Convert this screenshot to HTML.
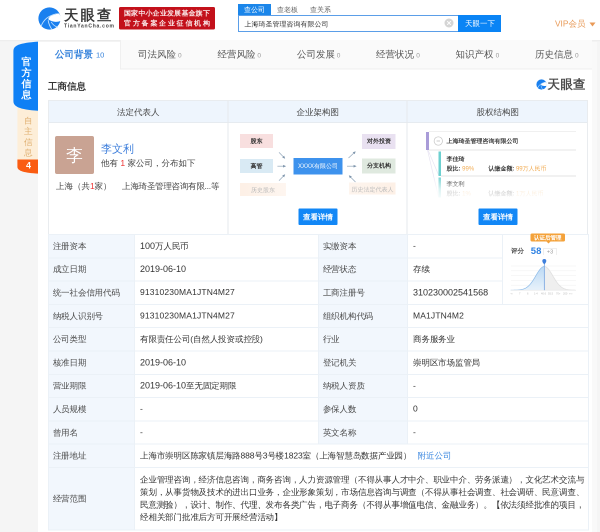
<!DOCTYPE html>
<html><head><meta charset="utf-8">
<style>
*{margin:0;padding:0;box-sizing:border-box}
html,body{width:600px;height:532px;overflow:hidden;background:#f5f5f5;font-family:"Liberation Sans",sans-serif;color:#333}
.a{position:absolute;white-space:nowrap}
#hdr{position:absolute;left:0;top:0;width:600px;height:40px;background:#fff}
#card{position:absolute;left:38px;top:41px;width:554px;height:491px;background:#fff}
.tab{position:absolute;top:41px;height:28px;font-size:9.5px;color:#555;line-height:27px;padding-left:18px}
.tab i{font-style:normal;font-size:6.5px;color:#999;margin-left:2px}
.ph{position:absolute;top:100px;height:24px;font-size:8.5px;color:#444;text-align:center;line-height:25px}
.pb{position:absolute;top:100px;height:134px;border:1px solid #e8eef5;border-bottom:none}
table{position:absolute;left:48px;top:234px;width:540px;table-layout:fixed;border-collapse:collapse;font-size:8.5px;letter-spacing:-0.12px}
td{border:1px solid #ebf1f7;height:23.3px;padding:0 5px;color:#333;white-space:nowrap}
td.l{background:#f2f7fd;color:#4a4a4a;padding-left:3.8px}
.bx{font-size:6.2px;font-weight:bold;color:#333;text-align:center;line-height:14px}
.btn{width:39px;height:16.5px;background:#1287f6;color:#fff;font-size:7.6px;font-weight:bold;text-align:center;line-height:16.5px;border-radius:1px}
.d{font-size:9px;letter-spacing:0}
.m{letter-spacing:0.15px}
</style></head><body>
<div id="wrap" style="position:absolute;left:0;top:0;transform:scale(0.5);transform-origin:0 0;width:1200px;height:1064px;will-change:transform"><div style="zoom:2;position:relative;width:600px;height:532px">
<div id="hdr">
  <svg class="a" style="left:37.4px;top:6.7px" width="24" height="24" viewBox="0 0 24 24">
    <circle cx="12" cy="12" r="11.1" fill="#1a80ef"/>
    <path d="M10.6 12.6 C12.6 8.8 16.6 6.6 21.4 7 C23.2 9 23.6 11.5 23.4 14.4 C19 16 14.4 15.6 10.6 12.6Z" fill="#fff"/>
    <path d="M3.6 19.6 C5.8 14 10.5 9.2 18.5 7.6" stroke="#bfe0ff" stroke-width="0.9" fill="none"/>
    <path d="M10.6 13.6 C11.2 17.4 12.6 20.6 14.6 23.2" stroke="#bfe0ff" stroke-width="0.9" fill="none"/>
    <path d="M13.6 15.4 C15.2 18 17.6 20 20.4 20.8" stroke="#bfe0ff" stroke-width="0.8" fill="none"/>
  </svg>
  <div class="a" style="left:64px;top:6px;font-size:14.5px;font-weight:bold;letter-spacing:2px;color:#383838;line-height:18px">天眼查</div>
  <div class="a" style="left:64px;top:23px;font-size:5px;font-weight:bold;color:#444;line-height:6px;letter-spacing:0.75px">TianYanCha.com</div>
  <div class="a" style="left:119px;top:7px;width:96px;height:22.5px;background:#c3111b;border-radius:1.5px"></div>
  <div class="a" style="left:124px;top:8px;font-size:7px;font-weight:bold;color:#fbeaea;line-height:10px;letter-spacing:0.17px">国家中小企业发展基金旗下</div>
  <div class="a" style="left:124px;top:18px;font-size:7px;font-weight:bold;color:#fbeaea;line-height:10px;letter-spacing:1.75px">官方备案企业征信机构</div>
  <div class="a" style="left:238px;top:4px;width:33px;height:11px;background:#1b86ea"></div>
  <div class="a" style="left:244px;top:4px;font-size:7px;color:#fff;line-height:11px">查公司</div>
  <div class="a" style="left:277px;top:4px;font-size:7px;color:#666;line-height:11px">查老板</div>
  <div class="a" style="left:310px;top:4px;font-size:7px;color:#666;line-height:11px">查关系</div>
  <div class="a" style="left:238px;top:15px;width:221px;height:17px;border:1px solid #5b9ee8"></div>
  <div class="a" style="left:244.5px;top:15.5px;font-size:7px;color:#333;line-height:17px">上海琦圣管理咨询有限公司</div>
  <svg class="a" style="left:444px;top:18px" width="10" height="10" viewBox="0 0 10 10"><circle cx="5" cy="5" r="4.5" fill="#d5d5d5"/><path d="M3.2 3.2L6.8 6.8M6.8 3.2L3.2 6.8" stroke="#fff" stroke-width="1"/></svg>
  <div class="a" style="left:458px;top:15px;width:43px;height:17px;background:#0a84f5"></div>
  <div class="a" style="left:465px;top:15px;font-size:7.4px;color:#fff;line-height:17px">天眼一下</div>
  <div class="a" style="left:555px;top:18px;font-size:8.3px;color:#e99a57;line-height:12px">VIP会员</div>
  <svg class="a" style="left:589.3px;top:22.5px" width="6" height="5" viewBox="0 0 6 5"><path d="M0 0H6L3 4Z" fill="#e99a57"/></svg>
</div>

<div id="card"></div>
<div class="a" style="left:592px;top:40px;width:5px;height:492px;background:#f9f9f9"></div>
<div class="a" style="left:0;top:40px;width:600px;height:2px;background:linear-gradient(#ececec,#f6f6f6)"></div>
<!-- left side tabs -->
<svg class="a" style="left:13px;top:41px" width="25" height="133" viewBox="0 0 25 133">
  <path d="M4.4 60 H25 V119 H4.4Z" fill="#fdeed8"/>
  <path d="M4.4 118.5 H25 V132.6 C12 132 4.4 130 4.4 126Z" fill="#fa5c12"/>
  <path d="M0.4 10 C0.4 4.5 6 2 25 0.6 V69.8 C6 68.5 0.4 65.5 0.4 60Z" fill="#0f80f5"/>
</svg>
<div class="a" style="left:21.5px;top:56.2px;width:10px;font-size:10px;font-weight:bold;color:#fff;line-height:11px;white-space:normal">官方信息</div>
<div class="a" style="left:24px;top:115.6px;width:8.5px;font-size:8.5px;color:#dfae6e;line-height:10.6px;white-space:normal">自主信息</div>
<div class="a" style="left:26px;top:159.8px;font-size:9px;font-weight:bold;color:#fff;line-height:11px">4</div>

<!-- tabs -->
<div class="a" style="left:55px;top:41px;font-size:9.5px;font-weight:bold;color:#3582db;line-height:27px">公司背景<span style="font-size:7.5px;font-weight:normal;margin-left:3px">10</span></div>
<div class="a" style="left:120px;top:40px;width:472px;height:29.5px;background:#fafafa;border-bottom:1px solid #efefef;border-left:1px solid #f0f0f0"></div>
<div class="tab" style="left:120.0px;width:79px">司法风险<i>0</i></div>
<div class="tab" style="left:199.4px;width:79px">经营风险<i>0</i></div>
<div class="tab" style="left:278.8px;width:79px">公司发展<i>0</i></div>
<div class="tab" style="left:358.2px;width:79px">经营状况<i>0</i></div>
<div class="tab" style="left:437.6px;width:79px">知识产权<i>0</i></div>
<div class="tab" style="left:517.0px;width:79px">历史信息<i>0</i></div>

<div class="a" style="left:48px;top:79.3px;font-size:9.5px;font-weight:bold;color:#333;line-height:14px">工商信息</div>
<svg class="a" style="left:536px;top:78.8px" width="11" height="11" viewBox="0 0 24 24">
    <circle cx="12" cy="12" r="11.1" fill="#1a80ef"/>
    <path d="M10.6 12.6 C12.6 8.8 16.6 6.6 21.4 7 C23.2 9 23.6 11.5 23.4 14.4 C19 16 14.4 15.6 10.6 12.6Z" fill="#fff"/>
    <path d="M3.6 19.6 C5.8 14 10.5 9.2 18.5 7.6" stroke="#bfe0ff" stroke-width="1.2" fill="none"/>
    <path d="M10.6 13.6 C11.2 17.4 12.6 20.6 14.6 23.2" stroke="#bfe0ff" stroke-width="1.2" fill="none"/>
</svg>
<div class="a" style="left:547.5px;top:76.5px;font-size:12.5px;font-weight:bold;letter-spacing:0.3px;color:#4a4a4a;line-height:15px">天眼查</div>

<!-- panels -->
<div class="a" style="left:48px;top:100px;width:540px;height:135px;border:1px solid #e9ecef;border-bottom:none"></div>
<div class="a" style="left:49px;top:101px;width:538px;height:22px;background:#eef5fd;border-bottom:1px solid #e6ebf0"></div>
<div class="a" style="left:227.5px;top:101px;width:1px;height:134px;background:#e6e9ed"></div>
<div class="a" style="left:406.5px;top:101px;width:1px;height:134px;background:#e6e9ed"></div>
<div class="ph" style="left:48px;width:180px">法定代表人</div>
<div class="ph" style="left:228px;width:179px">企业架构图</div>
<div class="ph" style="left:407px;width:181px">股权结构图</div>

<!-- panel 1 -->
<div class="a" style="left:55px;top:136px;width:39px;height:38px;background:#c9a393;border-radius:2px;color:#fff;font-size:17px;text-align:center;line-height:38px">李</div>
<div class="a" style="left:101px;top:142px;font-size:11px;color:#3e7fdc;line-height:14px">李文利</div>
<div class="a" style="left:101px;top:158px;font-size:8.5px;color:#444;line-height:11px">他有 <span style="color:#e33">1</span> 家公司，分布如下</div>
<div class="a" style="left:56px;top:181px;font-size:8.5px;color:#444;line-height:11px">上海（共<span style="color:#e33">1</span>家）</div>
<div class="a" style="left:122px;top:181px;font-size:8.5px;color:#444;line-height:11px;letter-spacing:-0.25px">上海琦圣管理咨询有限...等</div>


<!-- panel 2 -->
<div class="a bx" style="left:240px;top:134px;width:33px;height:14px;background:#f8dfdf">股东</div>
<div class="a bx" style="left:240px;top:159px;width:33px;height:14px;background:#d9eaf4">高管</div>
<div class="a bx" style="left:240px;top:183px;width:46px;height:13px;background:linear-gradient(90deg,#fdf0e6,#fef6f0);color:#bbb;font-weight:normal">历史股东</div>
<div class="a" style="left:293.5px;top:158px;width:49px;height:16.5px;background:#3d92ed;color:#fff;font-size:6px;text-align:center;line-height:16.5px">XXXX有限公司</div>
<div class="a bx" style="left:362px;top:134px;width:33.5px;height:15px;background:#e9e1f1">对外投资</div>
<div class="a bx" style="left:362px;top:158.5px;width:33.5px;height:15px;background:#dfe9df">分支机构</div>
<div class="a bx" style="left:349px;top:182.5px;width:46.5px;height:12px;background:linear-gradient(90deg,#fef5ee,#fdf0e6);color:#bbb;font-weight:normal">历史法定代表人</div>
<svg class="a" style="left:230px;top:130px" width="175" height="70" viewBox="230 130 175 70">
 <defs><marker id="ah" markerWidth="4" markerHeight="4" refX="2.6" refY="2" orient="auto"><path d="M0 0.2L4 2L0 3.8Z" fill="#7f96ad"/></marker></defs>
 <g stroke="#98abbe" stroke-width="0.75" fill="none" marker-end="url(#ah)">
  <path d="M279 152.4L284.5 158"/>
  <path d="M277.4 166.2H285"/>
  <path d="M279 180.6L284.5 175"/>
  <path d="M348.5 158L355 152"/>
  <path d="M347 166.2H355.5"/>
  <path d="M355.5 182L349.5 176"/>
 </g>
</svg>
<div class="a btn" style="left:298.5px;top:208.5px">查看详情</div>

<!-- panel 3 -->
<svg class="a" style="left:420px;top:128px" width="40" height="76" viewBox="420 128 40 76">
 <path d="M428 150L438.6 175M427.5 150L438.5 197" stroke="#e6e2f2" stroke-width="0.6" fill="none"/>
</svg>
<div class="a" style="left:429px;top:131px;width:147px;height:19.5px;background:#fff;border-top:1px solid #f0f0f0;border-bottom:1px solid #e6e6e6"></div>
<div class="a" style="left:426px;top:132px;width:3px;height:18px;background:#a99cd8"></div>
<svg class="a" style="left:433px;top:136px" width="11" height="11" viewBox="0 0 11 11"><circle cx="5.3" cy="5" r="4.2" fill="#fff" stroke="#c4c4c4" stroke-width="0.7"/><path d="M3.6 5H7" stroke="#aaa" stroke-width="0.6"/></svg>
<div class="a" style="left:446.5px;top:137px;font-size:6px;font-weight:bold;color:#3a3a3a;line-height:8px">上海琦圣管理咨询有限公司</div>
<div class="a" style="left:441px;top:151.5px;width:135px;height:25px;background:#fff;border-bottom:1px solid #e3e3e3"></div>
<div class="a" style="left:438.3px;top:151.6px;width:2.8px;height:24.3px;background:#6dd0d0"></div>
<div class="a" style="left:446.5px;top:155px;font-size:6px;font-weight:bold;color:#3a3a3a;line-height:8px">李佳琦</div>
<div class="a" style="left:446.5px;top:164.3px;font-size:6px;font-weight:bold;color:#3a3a3a;line-height:8px">股比: <span style="color:#f2ad55;font-weight:normal">99%</span></div>
<div class="a" style="left:488.3px;top:164.3px;font-size:6px;font-weight:bold;color:#3a3a3a;line-height:8px">认缴金额: <span style="color:#f2ad55;font-weight:normal">99万人民币</span></div>
<div class="a" style="left:438.3px;top:177.3px;width:2.8px;height:20px;background:#6dd0d0"></div>
<div class="a" style="left:446.5px;top:180.2px;font-size:6px;font-weight:bold;color:#3a3a3a;line-height:8px">李文利</div>
<div class="a" style="left:446.5px;top:189.3px;font-size:6px;font-weight:bold;color:#3a3a3a;line-height:8px">股比: <span style="color:#f2ad55;font-weight:normal">1%</span></div>
<div class="a" style="left:488.3px;top:189.3px;font-size:6px;font-weight:bold;color:#3a3a3a;line-height:8px">认缴金额: <span style="color:#f2ad55;font-weight:normal">1万人民币</span></div>
<div class="a" style="left:425px;top:177px;width:155px;height:24px;background:linear-gradient(180deg,rgba(255,255,255,0.1),rgba(255,255,255,0.75) 50%,#fff)"></div>
<div class="a btn" style="left:478.5px;top:208.5px">查看详情</div>

<!-- table -->
<table>
<colgroup><col style="width:86px"><col style="width:184px"><col style="width:89px"><col style="width:95px"><col style="width:86px"></colgroup>
<tr><td class="l">注册资本</td><td><span class="d">100</span>万人民币</td><td class="l">实缴资本</td><td>-</td><td rowspan="3"></td></tr>
<tr><td class="l">成立日期</td><td><span class="d">2019-06-10</span></td><td class="l">经营状态</td><td>存续</td></tr>
<tr><td class="l">统一社会信用代码</td><td><span class="m">91310230MA1JTN4M27</span></td><td class="l">工商注册号</td><td><span class="d">310230002541568</span></td></tr>
<tr><td class="l">纳税人识别号</td><td><span class="m">91310230MA1JTN4M27</span></td><td class="l">组织机构代码</td><td colspan="2"><span class="m">MA1JTN4M2</span></td></tr>
<tr><td class="l">公司类型</td><td>有限责任公司(自然人投资或控股)</td><td class="l">行业</td><td colspan="2">商务服务业</td></tr>
<tr><td class="l">核准日期</td><td><span class="d">2019-06-10</span></td><td class="l">登记机关</td><td colspan="2">崇明区市场监管局</td></tr>
<tr><td class="l">营业期限</td><td><span class="d">2019-06-10</span>至无固定期限</td><td class="l">纳税人资质</td><td colspan="2">-</td></tr>
<tr><td class="l">人员规模</td><td>-</td><td class="l">参保人数</td><td colspan="2">0</td></tr>
<tr><td class="l">曾用名</td><td>-</td><td class="l">英文名称</td><td colspan="2">-</td></tr>
<tr><td class="l">注册地址</td><td colspan="4">上海市崇明区陈家镇层海路888号3号楼1823室（上海智慧岛数据产业园） <span style="color:#3a87e0;margin-left:4px">附近公司</span></td></tr>
<tr><td class="l" style="height:62.3px">经营范围</td><td colspan="4" style="line-height:12.6px;padding-top:3px;padding-bottom:3px;font-size:8.5px">企业管理咨询，经济信息咨询，商务咨询，人力资源管理（不得从事人才中介、职业中介、劳务派遣），文化艺术交流与<br>策划，从事货物及技术的进出口业务，企业形象策划，市场信息咨询与调查（不得从事社会调查、社会调研、民意调查、<br>民意测验），设计、制作、代理、发布各类广告，电子商务（不得从事增值电信、金融业务）。【依法须经批准的项目，<br>经相关部门批准后方可开展经营活动】</td></tr>
</table>
<!-- score -->
<svg class="a" style="left:502px;top:234px" width="86" height="70" viewBox="502 234 86 70">
 <defs><linearGradient id="lg" x1="0" y1="0" x2="0" y2="1"><stop offset="0" stop-color="#bcdaf5"/><stop offset="1" stop-color="#e8f2fb"/></linearGradient></defs>
 <path d="M511 266H576" stroke="#f0f0f0" stroke-width="0.5"/><path d="M511 270.8H576" stroke="#f0f0f0" stroke-width="0.5"/><path d="M511 275.6H576" stroke="#f0f0f0" stroke-width="0.5"/><path d="M511 280.4H576" stroke="#f0f0f0" stroke-width="0.5"/><path d="M511 285.2H576" stroke="#f0f0f0" stroke-width="0.5"/>
 <polygon points="511,290.2 511.0,290.19 511.5,290.19 512.0,290.18 512.5,290.18 513.0,290.17 513.5,290.17 514.0,290.16 514.5,290.15 515.0,290.14 515.5,290.12 516.0,290.11 516.5,290.09 517.0,290.06 517.5,290.04 518.0,290.00 518.5,289.96 519.0,289.92 519.5,289.86 520.0,289.80 520.5,289.73 521.0,289.65 521.5,289.55 522.0,289.44 522.5,289.32 523.0,289.17 523.5,289.01 524.0,288.83 524.5,288.63 525.0,288.40 525.5,288.15 526.0,287.87 526.5,287.55 527.0,287.21 527.5,286.84 528.0,286.43 528.5,285.99 529.0,285.51 529.5,284.99 530.0,284.44 530.5,283.86 531.0,283.23 531.5,282.57 532.0,281.88 532.5,281.16 533.0,280.41 533.5,279.63 534.0,278.83 534.5,278.01 535.0,277.17 535.5,276.33 536.0,275.49 536.5,274.64 537.0,273.81 537.5,272.99 538.0,272.19 538.5,271.42 539.0,270.69 539.5,269.99 540.0,269.35 540.5,268.75 541.0,268.22 541.5,267.75 542.0,267.35 542.5,267.03 543.0,266.78 543.5,266.60 544.0,266.51 544.3,266.50 544.3,290.2" fill="url(#lg)"/>
 <polygon points="544.3,290.2 544.3,266.50 544.5,266.51 545.0,266.58 545.5,266.74 546.0,266.97 546.5,267.28 547.0,267.67 547.5,268.12 548.0,268.64 548.5,269.22 549.0,269.86 549.5,270.54 550.0,271.27 550.5,272.04 551.0,272.83 551.5,273.64 552.0,274.48 552.5,275.32 553.0,276.16 553.5,277.01 554.0,277.84 554.5,278.66 555.0,279.47 555.5,280.25 556.0,281.01 556.5,281.74 557.0,282.44 557.5,283.10 558.0,283.73 558.5,284.33 559.0,284.89 559.5,285.41 560.0,285.90 560.5,286.35 561.0,286.76 561.5,287.14 562.0,287.49 562.5,287.81 563.0,288.09 563.5,288.35 564.0,288.58 564.5,288.79 565.0,288.98 565.5,289.14 566.0,289.29 566.5,289.42 567.0,289.53 567.5,289.63 568.0,289.71 568.5,289.79 569.0,289.85 569.5,289.91 570.0,289.95 570.5,290.00 571.0,290.03 571.5,290.06 572.0,290.08 572.5,290.10 573.0,290.12 573.5,290.14 574.0,290.15 574.5,290.16 575.0,290.17 575.5,290.17 576,290.2" fill="#efefef"/>
 <polyline points="511,290.2 511.0,290.19 511.5,290.19 512.0,290.18 512.5,290.18 513.0,290.17 513.5,290.17 514.0,290.16 514.5,290.15 515.0,290.14 515.5,290.12 516.0,290.11 516.5,290.09 517.0,290.06 517.5,290.04 518.0,290.00 518.5,289.96 519.0,289.92 519.5,289.86 520.0,289.80 520.5,289.73 521.0,289.65 521.5,289.55 522.0,289.44 522.5,289.32 523.0,289.17 523.5,289.01 524.0,288.83 524.5,288.63 525.0,288.40 525.5,288.15 526.0,287.87 526.5,287.55 527.0,287.21 527.5,286.84 528.0,286.43 528.5,285.99 529.0,285.51 529.5,284.99 530.0,284.44 530.5,283.86 531.0,283.23 531.5,282.57 532.0,281.88 532.5,281.16 533.0,280.41 533.5,279.63 534.0,278.83 534.5,278.01 535.0,277.17 535.5,276.33 536.0,275.49 536.5,274.64 537.0,273.81 537.5,272.99 538.0,272.19 538.5,271.42 539.0,270.69 539.5,269.99 540.0,269.35 540.5,268.75 541.0,268.22 541.5,267.75 542.0,267.35 542.5,267.03 543.0,266.78 543.5,266.60 544.0,266.51 544.3,266.50" fill="none" stroke="#8cbbe9" stroke-width="0.7"/>
 <polyline points="544.3,266.50 544.5,266.51 545.0,266.58 545.5,266.74 546.0,266.97 546.5,267.28 547.0,267.67 547.5,268.12 548.0,268.64 548.5,269.22 549.0,269.86 549.5,270.54 550.0,271.27 550.5,272.04 551.0,272.83 551.5,273.64 552.0,274.48 552.5,275.32 553.0,276.16 553.5,277.01 554.0,277.84 554.5,278.66 555.0,279.47 555.5,280.25 556.0,281.01 556.5,281.74 557.0,282.44 557.5,283.10 558.0,283.73 558.5,284.33 559.0,284.89 559.5,285.41 560.0,285.90 560.5,286.35 561.0,286.76 561.5,287.14 562.0,287.49 562.5,287.81 563.0,288.09 563.5,288.35 564.0,288.58 564.5,288.79 565.0,288.98 565.5,289.14 566.0,289.29 566.5,289.42 567.0,289.53 567.5,289.63 568.0,289.71 568.5,289.79 569.0,289.85 569.5,289.91 570.0,289.95 570.5,290.00 571.0,290.03 571.5,290.06 572.0,290.08 572.5,290.10 573.0,290.12 573.5,290.14 574.0,290.15 574.5,290.16 575.0,290.17 575.5,290.17" fill="none" stroke="#dedede" stroke-width="0.7"/>
 <path d="M511 290.2H576" stroke="#e3e3e3" stroke-width="0.5"/>
 <path d="M544.3 262V290.2" stroke="#6399df" stroke-width="0.7"/>
 <path d="M544.3 264.5 C543.6999999999999 263.5 542.3 262.5 542.3 261 A2 2 0 1 1 546.3 261 C546.3 262.5 544.9 263.5 544.3 264.5Z" fill="#3f7fdc"/>
 <g font-size="2.6" fill="#bbb" font-family="Liberation Sans">
  <text x="510" y="294.6">-∞</text><text x="519" y="294.6">7</text><text x="527" y="294.6">6</text><text x="534" y="294.6">1-4</text><text x="541" y="294.6">40.6</text><text x="548" y="294.6">55.5</text><text x="556" y="294.6">70+</text><text x="563" y="294.6">200</text><text x="569" y="294.6">+∞</text>
 </g>
</svg>
<div class="a" style="left:530.7px;top:233.3px;width:34.3px;height:8.4px;background:#f4a23a;border-radius:1.5px;color:#fff;font-size:5.5px;font-weight:bold;text-align:center;line-height:8.4px">认证后管理</div>
<svg class="a" style="left:546.3px;top:241.6px" width="4" height="3" viewBox="0 0 4 3"><path d="M0 0H4L2 2Z" fill="#f3a13a"/></svg>
<div class="a" style="left:511px;top:246.5px;font-size:6.5px;font-weight:bold;color:#555;line-height:9px">评分</div>
<div class="a" style="left:530.8px;top:245px;font-size:9.5px;font-weight:bold;color:#2f82e3;line-height:12px">58</div>
<div class="a" style="left:543.5px;top:248px;width:13px;height:7px;border:0.6px solid #ddd;color:#999;font-size:5.5px;text-align:center;line-height:6.5px">+3</div>
</div></div>
</body></html>
